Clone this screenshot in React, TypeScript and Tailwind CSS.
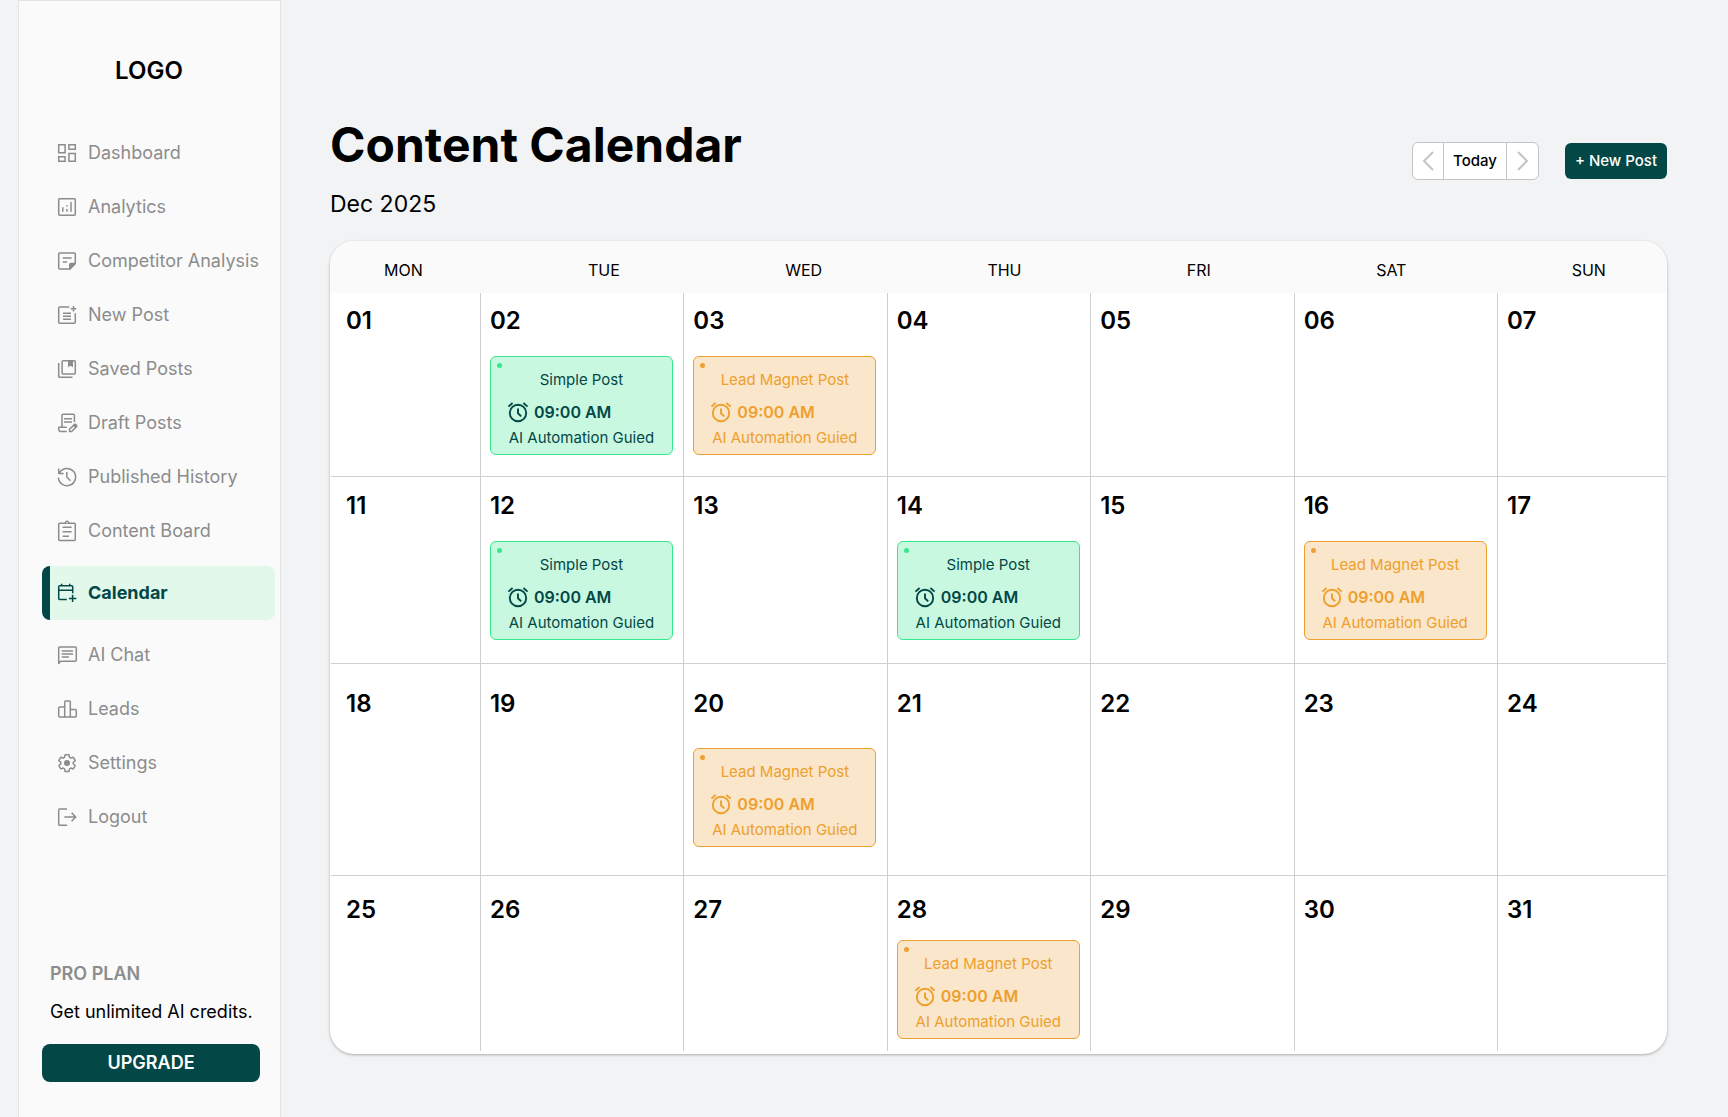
import React from 'react'
import classNames from 'clsx'

type IconProps = {
    children: React.ReactNode
    className?: string
}

const Icon = ({ children, className }: IconProps) => (
    <svg
        viewBox="0 0 24 24"
        className={classNames("size-6 shrink-0", className)}
        fill="none"
        stroke="currentColor"
        strokeWidth={1.5}
        strokeLinejoin="round"
        aria-hidden="true"
    >
        {children}
    </svg>
)

const DashboardIcon = () => (
    <Icon>
        <path strokeLinejoin="miter" d="M3.7 3.7h6.4v8H3.7zM13.9 3.7h6.4v4.5h-6.4zM13.9 12.6h6.4v7.7h-6.4zM3.7 15.8h6.4v4.5H3.7z" />
    </Icon>
)

const AnalyticsIcon = () => (
    <Icon>
        <rect x="3.7" y="3.7" width="16.6" height="16.6" rx="1" />
        <path d="M7.8 12.3v4.4M11.9 10v1.5M11.9 14v2.7M16 7v9.7" />
    </Icon>
)

const NoteIcon = () => (
    <Icon>
        <path d="M14.8 20H4.7a1 1 0 0 1-1-1V5a1 1 0 0 1 1-1h14.6a1 1 0 0 1 1 1v9.5z" />
        <path fill="currentColor" d="M14.8 20v-4.5a1 1 0 0 1 1-1h4.5z" />
        <path d="M7.7 9h9M7.7 13h4.4" />
    </Icon>
)

const PostAddIcon = () => (
    <Icon>
        <path d="M14.2 3.9H4.7a1 1 0 0 0-1 1v14.4a1 1 0 0 0 1 1h14.6a1 1 0 0 0 1-1v-9M18.5 3v5.6M15.7 5.8h5.6M8 10.2h8M8 13.2h8M8 16.3h8" />
    </Icon>
)

const SavedIcon = () => (
    <Icon>
        <rect x="7.1" y="3.7" width="13.2" height="13.2" rx="1" />
        <path d="M3.7 6v13.3a1 1 0 0 0 1 1h12.8" />
        <path fill="currentColor" stroke="none" d="M13 3.7h5v6.6l-2.5-1.5-2.5 1.5z" />
    </Icon>
)

const DraftIcon = () => (
    <Icon>
        <path d="M7 16.2V4.3a1 1 0 0 1 1-1h10.4a1 1 0 0 1 1 1v6.8M11.8 16.3H3.7v2.2a2 2 0 0 0 2 2h6.1M9 7.8h8M9 10.9h8" />
        <path d="M14.5 20.5v-2.3l4.9-4.6a1 1 0 0 1 1.4 0l.6.6a1 1 0 0 1 0 1.4l-4.7 4.9z" />
        <path fill="currentColor" d="m18.9 14.4 1.2-1 1.4 1.6-1 1z" />
    </Icon>
)

const HistoryIcon = () => (
    <Icon>
        <path d="M3.4 12.6A8.6 8.6 0 1 0 4.5 7.8M3.7 3.6v4.8h4.9M11.8 7v5.1l3.6 3.7" />
    </Icon>
)

const BoardIcon = () => (
    <Icon>
        <rect x="3.7" y="4.3" width="16.6" height="17.3" rx="1" />
        <path fill="#fafafa" d="M9.6 4.3h1a1.5 1.5 0 1 1 2.8 0h1" />
        <path d="M7.6 8.2h9M7.6 12.8h9M7.6 17.2H14" />
    </Icon>
)

const CalendarIcon = () => (
    <Icon>
        <path d="M11.8 18.4H4.7a1 1 0 0 1-1-1V5.8a1 1 0 0 1 1-1h12a1 1 0 0 1 1 1v6.4M3.7 9.3h14M6.6 2.7v2.5M14.7 2.7v2.5M17.6 13.7v7.4M13.9 17.4h7.4" />
    </Icon>
)

const ChatIcon = () => (
    <Icon>
        <path d="M3.7 20.4V5a1 1 0 0 1 1-1h15.6a1 1 0 0 1 1 1v12.3a1 1 0 0 1-1 1H5.8zM6.7 7.9H18M6.7 10.9H18M6.7 13.9H14" />
    </Icon>
)

const LeadsIcon = () => (
    <Icon>
        <path d="M9.7 10.1h-5a1 1 0 0 0-1 1v8a1 1 0 0 0 1 1h15.6a1 1 0 0 0 1-1v-5.6a1 1 0 0 0-1-1h-5M9.7 20.1V5a1 1 0 0 1 1-1h3.6a1 1 0 0 1 1 1v15.1" />
    </Icon>
)

const SettingsIcon = () => (
    <Icon>
        <path
            transform="translate(1.6 1.6) scale(.87)"
            strokeWidth={1.7}
            d="M19.14 12.94c.04-.3.06-.61.06-.94 0-.32-.02-.64-.07-.94l2.03-1.58c.18-.14.23-.41.12-.61l-1.92-3.32c-.12-.22-.37-.29-.59-.22l-2.39.96c-.5-.38-1.03-.7-1.62-.94l-.36-2.54c-.04-.24-.24-.41-.48-.41h-3.84c-.24 0-.43.17-.47.41l-.36 2.54c-.59.24-1.13.57-1.62.94l-2.39-.96c-.22-.08-.47 0-.59.22L2.74 8.87c-.12.21-.08.47.12.61l2.03 1.58c-.05.3-.09.63-.09.94s.02.64.07.94l-2.03 1.58c-.18.14-.23.41-.12.61l1.92 3.32c.12.22.37.29.59.22l2.39-.96c.5.38 1.03.7 1.62.94l.36 2.54c.05.24.24.41.48.41h3.84c.24 0 .44-.17.47-.41l.36-2.54c.59-.24 1.13-.56 1.62-.94l2.39.96c.22.08.47 0 .59-.22l1.92-3.32c.12-.22.07-.47-.12-.61l-2.01-1.58z"
        />
        <circle cx="12" cy="12" r="3" fill="currentColor" stroke="none" />
    </Icon>
)

const LogoutIcon = () => (
    <Icon>
        <path strokeLinejoin="miter" d="M12 3.9H4.7a1 1 0 0 0-1 1v14.4a1 1 0 0 0 1 1H12M9.3 12h11.2M16.6 7.8l4.1 4.2-4.1 4.2" />
    </Icon>
)

const AlarmIcon = () => (
    <Icon>
        <circle cx="12" cy="13" r="8.2" strokeWidth={1.9} />
        <path strokeWidth={1.9} d="M12 8.4v4.9l3.2 3.1M2.4 6.6 6.6 3M21.6 6.6 17.4 3" />
    </Icon>
)

const navItems = [
    { name: 'Dashboard', icon: DashboardIcon },
    { name: 'Analytics', icon: AnalyticsIcon },
    { name: 'Competitor Analysis', icon: NoteIcon },
    { name: 'New Post', icon: PostAddIcon },
    { name: 'Saved Posts', icon: SavedIcon },
    { name: 'Draft Posts', icon: DraftIcon },
    { name: 'Published History', icon: HistoryIcon },
    { name: 'Content Board', icon: BoardIcon },
    { name: 'Calendar', icon: CalendarIcon },
    { name: 'AI Chat', icon: ChatIcon },
    { name: 'Leads', icon: LeadsIcon },
    { name: 'Settings', icon: SettingsIcon },
    { name: 'Logout', icon: LogoutIcon },
]

const weekdays = ['MON', 'TUE', 'WED', 'THU', 'FRI', 'SAT', 'SUN']

type PostType = 'simple' | 'lead'

type Week = {
    days: string[]
    posts: Record<string, PostType>
    rowClass: string
    cellClass: string
}

const weeks: Week[] = [
    {
        days: ['01', '02', '03', '04', '05', '06', '07'],
        posts: { '02': 'simple', '03': 'lead' },
        rowClass: 'min-h-[183px]',
        cellClass: 'pt-3 gap-[19px]',
    },
    {
        days: ['11', '12', '13', '14', '15', '16', '17'],
        posts: { '12': 'simple', '14': 'simple', '16': 'lead' },
        rowClass: 'min-h-[187px] border-t',
        cellClass: 'pt-[13px] gap-[19px]',
    },
    {
        days: ['18', '19', '20', '21', '22', '23', '24'],
        posts: { '20': 'lead' },
        rowClass: 'min-h-[212px] border-t',
        cellClass: 'pt-6 gap-7',
    },
    {
        days: ['25', '26', '27', '28', '29', '30', '31'],
        posts: { '28': 'lead' },
        rowClass: 'min-h-[176px] border-t',
        cellClass: 'pt-[18px] gap-3.5',
    },
]

const PostCard = ({ type }: { type: PostType }) => {
    const simple = type == 'simple'
    return (
        <div
            className={classNames(
                "relative flex h-[99px] w-full max-w-[183px] flex-col rounded-md border pt-[11px] text-[15px]",
                simple ? "border-[#34e98c] bg-[#c9f8e0] text-[#034746]" : "border-[#eda02d] bg-[#fae6ca] text-[#eda02d]"
            )}
        >
            <span className={classNames("absolute left-1.5 top-1.5 size-[5px] rounded-full", simple ? "bg-[#34e98c]" : "bg-[#eda02d]")} />
            <p className="text-center leading-6">{simple ? 'Simple Post' : 'Lead Magnet Post'}</p>
            <p className="mt-2 flex items-center gap-1 pl-[15px] text-base font-semibold leading-6">
                <AlarmIcon />
                09:00 AM
            </p>
            <p className="mt-0.5 whitespace-nowrap text-center leading-6">AI Automation Guied</p>
        </div>
    )
}

const Sidebar = () => (
    <aside className="flex w-[263px] shrink-0 flex-col border border-b-0 border-[#e4e4e4] bg-[#fafafa] pb-[35px] pl-[23px]">
        <div className="mr-6 pt-[54px] text-center text-2xl font-semibold">LOGO</div>
        <nav className="mt-[39px] mr-[5px] flex flex-col">
            {
                navItems.map((item) => {
                    const active = item.name == 'Calendar'
                    return (
                        <a
                            key={item.name}
                            href="#"
                            className={classNames(
                                "flex h-[54px] items-center gap-[9px] whitespace-nowrap text-lg",
                                active
                                    ? "my-2 rounded-lg border-l-8 border-[#034746] bg-[#e1f8eb] pl-[5px] font-bold text-[#034746]"
                                    : "pl-[13px] text-[#8c8c8c]"
                            )}
                        >
                            <item.icon />
                            {item.name}
                        </a>
                    )
                })
            }
        </nav>
        <div className="mt-auto mr-5">
            <h2 className="pl-2 text-lg font-semibold leading-6 text-[#8c8c8c]">PRO PLAN</h2>
            <p className="mt-3.5 whitespace-nowrap pl-2 text-lg leading-6">Get unlimited AI credits.</p>
            <button type="button" className="mt-5 h-[38px] w-full rounded-lg bg-[#034746] text-lg font-semibold text-white">
                UPGRADE
            </button>
        </div>
    </aside>
)

const Toolbar = () => (
    <div className="flex items-center gap-[26px] pb-10 font-medium">
        <div className="flex h-[38px] divide-x divide-[#c4c4c4] rounded-md border border-[#c4c4c4] bg-white">
            <button type="button" aria-label="Previous month" className="flex w-[31px] items-center justify-center text-[#c4c4c4]">
                <svg viewBox="0 0 12 20" className="h-5 w-3" fill="none" stroke="currentColor" strokeWidth={2} aria-hidden="true">
                    <path d="M11 1 2 10l9 9" />
                </svg>
            </button>
            <button type="button" className="w-[63px] text-[15px]">Today</button>
            <button type="button" aria-label="Next month" className="flex w-[31px] items-center justify-center text-[#c4c4c4]">
                <svg viewBox="0 0 12 20" className="h-5 w-3" fill="none" stroke="currentColor" strokeWidth={2} aria-hidden="true">
                    <path d="m1 1 9 9-9 9" />
                </svg>
            </button>
        </div>
        <button type="button" className="h-9 w-[102px] whitespace-nowrap rounded-md bg-[#034746] text-[15px] text-white">
            + New Post
        </button>
    </div>
)

const MonthTable = () => (
    <table className="mt-[21px] block overflow-hidden rounded-3xl bg-white shadow-[0_1px_3px_rgba(0,0,0,0.3)]">
        <thead className="block bg-[#fafafa]">
            <tr className="flex h-[52px] items-center justify-between pl-[54px] pr-[61px]">
                {weekdays.map((day) => <th key={day} scope="col" className="pt-1.5 text-base font-normal">{day}</th>)}
            </tr>
        </thead>
        <tbody className="block px-px pb-[3px]">
            {
                weeks.map((week) => (
                    <tr
                        key={week.days[0]}
                        className={classNames(
                            "grid grid-cols-[298fr_407fr_407fr_407fr_407fr_407fr_338fr] border-[#cfcfcf]",
                            week.rowClass
                        )}
                    >
                        {
                            week.days.map((day, dayIdx) => (
                                <td
                                    key={day}
                                    className={classNames(
                                        "flex min-w-0 flex-col border-[#cfcfcf]",
                                        dayIdx == 0 ? "pl-[15px]" : "border-l px-[9px]",
                                        week.cellClass
                                    )}
                                >
                                    <span className="text-2xl font-semibold leading-8">{day}</span>
                                    {week.posts[day] && <PostCard type={week.posts[day]} />}
                                </td>
                            ))
                        }
                    </tr>
                ))
            }
        </tbody>
    </table>
)

export default function App() {
    return (
        <div className="flex min-h-screen bg-[#f1f3f5] pl-[18px] font-['Inter','Liberation_Sans',sans-serif] text-black">
            <Sidebar />
            <main className="min-w-0 flex-1 pb-[63px] pl-[49px] pr-[61px] pt-[115px]">
                <header className="flex items-end justify-between">
                    <div>
                        <h1 className="text-5xl font-bold leading-[60px]">Content Calendar</h1>
                        <p className="mt-[13px] text-[23px] leading-8">Dec 2025</p>
                    </div>
                    <Toolbar />
                </header>
                <MonthTable />
            </main>
        </div>
    )
}
